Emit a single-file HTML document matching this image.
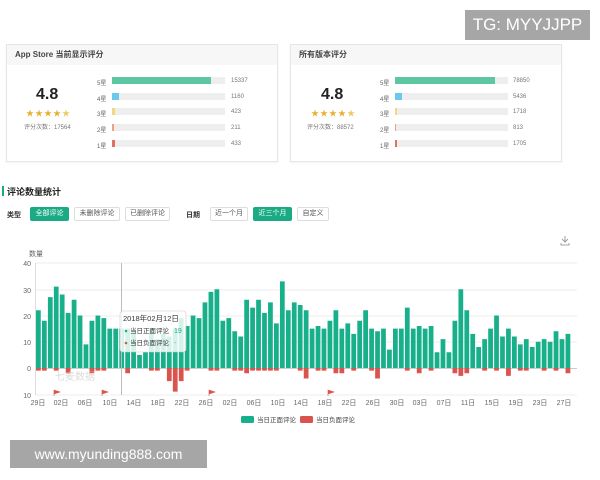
<!DOCTYPE html>
<html><head><meta charset="utf-8"><style>
*{margin:0;padding:0;box-sizing:border-box}
body{width:600px;height:480px;background:#fff;position:relative;overflow:hidden;font-family:"Liberation Sans","Noto Sans CJK SC",sans-serif;color:#333}
.a{position:absolute}
.card{position:absolute;border:1px solid #e6e6e6;background:#fff;box-shadow:0 1px 2px rgba(0,0,0,.05)}
.card .hd{height:20px;background:#f7f7f7;font-size:8px;font-weight:bold;line-height:20px;padding-left:8px;color:#444}
.sc{position:absolute;font-size:16px;font-weight:bold;color:#222}
.st{position:absolute;font-size:8px;color:#e8b030;letter-spacing:1px}
.cnt{position:absolute;font-size:6px;color:#777}
.rl{position:absolute;font-size:6px;color:#666}
.bg{position:absolute;height:7px;background:#eeeeee;width:113px}
.bg i{position:absolute;left:0;top:0;height:7px;display:block}
.btn{position:absolute;top:207px;height:14px;border:1px solid #ddd;font-size:7px;line-height:11px;text-align:center;color:#555;border-radius:2px;background:#fff}
.on{background:#1aab84;border-color:#1aab84;color:#fff}
</style></head><body>

<div class="a" style="left:465px;top:10px;width:125px;height:30px;background:#a6a6a6;color:#fff;font-size:17px;line-height:30px;text-align:center">TG: MYYJJPP</div>

<div class="card" style="left:6px;top:44px;width:272px;height:118px">
 <div class="hd">App Store 当前显示评分</div>
</div>
<div class="sc" style="left:36px;top:86px">4.8</div>
<div class="st" style="left:26px;top:108px">★★★★<span style="color:#f0c860">★</span></div>
<div class="cnt" style="left:24px;top:122px">评分次数：17564</div>

<div class="card" style="left:290px;top:44px;width:272px;height:118px">
 <div class="hd">所有版本评分</div>
</div>
<div class="sc" style="left:321px;top:86px">4.8</div>
<div class="st" style="left:311px;top:108px">★★★★<span style="color:#f0c860">★</span></div>
<div class="cnt" style="left:307px;top:122px">评分次数：88572</div>

<div class="rl" style="left:97px;top:78px">5星</div><div class="bg" style="left:112px;top:77px"><i style="width:99px;background:#5cc7a0"></i></div><div class="cnt" style="left:231px;top:78px">15337</div>
<div class="rl" style="left:97px;top:94px">4星</div><div class="bg" style="left:112px;top:93px"><i style="width:7px;background:#6cc9ec"></i></div><div class="cnt" style="left:231px;top:94px">1160</div>
<div class="rl" style="left:97px;top:109px">3星</div><div class="bg" style="left:112px;top:108px"><i style="width:3px;background:#f5d77c"></i></div><div class="cnt" style="left:231px;top:109px">423</div>
<div class="rl" style="left:97px;top:125px">2星</div><div class="bg" style="left:112px;top:124px"><i style="width:2px;background:#f0a080"></i></div><div class="cnt" style="left:231px;top:125px">211</div>
<div class="rl" style="left:97px;top:141px">1星</div><div class="bg" style="left:112px;top:140px"><i style="width:3px;background:#e07060"></i></div><div class="cnt" style="left:231px;top:141px">433</div>
<div class="rl" style="left:380px;top:78px">5星</div><div class="bg" style="left:395px;top:77px"><i style="width:100px;background:#5cc7a0"></i></div><div class="cnt" style="left:513px;top:78px">78850</div>
<div class="rl" style="left:380px;top:94px">4星</div><div class="bg" style="left:395px;top:93px"><i style="width:7px;background:#6cc9ec"></i></div><div class="cnt" style="left:513px;top:94px">5436</div>
<div class="rl" style="left:380px;top:109px">3星</div><div class="bg" style="left:395px;top:108px"><i style="width:2px;background:#f5d77c"></i></div><div class="cnt" style="left:513px;top:109px">1718</div>
<div class="rl" style="left:380px;top:125px">2星</div><div class="bg" style="left:395px;top:124px"><i style="width:1px;background:#f0a080"></i></div><div class="cnt" style="left:513px;top:125px">813</div>
<div class="rl" style="left:380px;top:141px">1星</div><div class="bg" style="left:395px;top:140px"><i style="width:2px;background:#e07060"></i></div><div class="cnt" style="left:513px;top:141px">1705</div>

<div class="a" style="left:2px;top:186px;width:2px;height:10px;background:#1aab84"></div>
<div class="a" style="left:7px;top:185px;font-size:9px;font-weight:bold;color:#222">评论数量统计</div>

<div class="a" style="left:7px;top:210px;font-size:7px;font-weight:bold">类型</div>
<div class="btn on" style="left:30px;width:39px">全部评论</div>
<div class="btn" style="left:74px;width:46px">未删除评论</div>
<div class="btn" style="left:125px;width:45px">已删除评论</div>
<div class="a" style="left:186px;top:210px;font-size:7px;font-weight:bold">日期</div>
<div class="btn" style="left:210px;width:38px">近一个月</div>
<div class="btn on" style="left:253px;width:39px">近三个月</div>
<div class="btn" style="left:297px;width:32px">自定义</div>

<svg class="a" style="left:0;top:0" width="600" height="480" font-family="Liberation Sans,Noto Sans CJK SC,sans-serif">
 <text x="29" y="256" font-size="7" fill="#666">数量</text>
 <g stroke="#888" fill="none" stroke-width="0.8"><path d="M565 236v5M562 239l3 3 3-3M561 243v2h8v-2"/></g>
 <g stroke="#eee" stroke-width="1">
  <line x1="36" y1="263" x2="577" y2="263"/><line x1="36" y1="290" x2="577" y2="290"/>
  <line x1="36" y1="316" x2="577" y2="316"/><line x1="36" y1="342" x2="577" y2="342"/>
  <line x1="36" y1="395" x2="577" y2="395"/>
 </g>
 <line x1="36" y1="368.5" x2="577" y2="368.5" stroke="#ccc"/>
 <line x1="35.5" y1="263" x2="35.5" y2="395" stroke="#ddd"/>
 <g font-size="7" fill="#666" text-anchor="end">
  <text x="31" y="266">40</text><text x="31" y="293">30</text><text x="31" y="319">20</text>
  <text x="31" y="345">10</text><text x="31" y="371">0</text><text x="31" y="398">10</text>
 </g>
 <g transform="translate(36,368) scale(5.95,-2.625)" fill="#17b08a">
  <rect x="0" y="0" width="0.8" height="22"/><rect x="1" y="0" width="0.8" height="18"/><rect x="2" y="0" width="0.8" height="27"/><rect x="3" y="0" width="0.8" height="31"/><rect x="4" y="0" width="0.8" height="28"/><rect x="5" y="0" width="0.8" height="21"/><rect x="6" y="0" width="0.8" height="26"/><rect x="7" y="0" width="0.8" height="20"/><rect x="8" y="0" width="0.8" height="9"/><rect x="9" y="0" width="0.8" height="18"/>
  <rect x="10" y="0" width="0.8" height="20"/><rect x="11" y="0" width="0.8" height="19"/><rect x="12" y="0" width="0.8" height="15"/><rect x="13" y="0" width="0.8" height="15"/><rect x="14" y="0" width="0.8" height="15"/><rect x="15" y="0" width="0.8" height="15"/><rect x="16" y="0" width="0.8" height="14"/><rect x="17" y="0" width="0.8" height="5"/><rect x="18" y="0" width="0.8" height="6"/><rect x="19" y="0" width="0.8" height="15"/>
  <rect x="20" y="0" width="0.8" height="11"/><rect x="21" y="0" width="0.8" height="13"/><rect x="22" y="0" width="0.8" height="12"/><rect x="23" y="0" width="0.8" height="15"/><rect x="24" y="0" width="0.8" height="19"/><rect x="25" y="0" width="0.8" height="16"/><rect x="26" y="0" width="0.8" height="20"/><rect x="27" y="0" width="0.8" height="19"/><rect x="28" y="0" width="0.8" height="25"/><rect x="29" y="0" width="0.8" height="29"/>
  <rect x="30" y="0" width="0.8" height="30"/><rect x="31" y="0" width="0.8" height="18"/><rect x="32" y="0" width="0.8" height="19"/><rect x="33" y="0" width="0.8" height="14"/><rect x="34" y="0" width="0.8" height="12"/><rect x="35" y="0" width="0.8" height="26"/><rect x="36" y="0" width="0.8" height="23"/><rect x="37" y="0" width="0.8" height="26"/><rect x="38" y="0" width="0.8" height="21"/><rect x="39" y="0" width="0.8" height="25"/>
  <rect x="40" y="0" width="0.8" height="17"/><rect x="41" y="0" width="0.8" height="33"/><rect x="42" y="0" width="0.8" height="22"/><rect x="43" y="0" width="0.8" height="25"/><rect x="44" y="0" width="0.8" height="24"/><rect x="45" y="0" width="0.8" height="22"/><rect x="46" y="0" width="0.8" height="15"/><rect x="47" y="0" width="0.8" height="16"/><rect x="48" y="0" width="0.8" height="15"/><rect x="49" y="0" width="0.8" height="18"/>
  <rect x="50" y="0" width="0.8" height="22"/><rect x="51" y="0" width="0.8" height="15"/><rect x="52" y="0" width="0.8" height="17"/><rect x="53" y="0" width="0.8" height="13"/><rect x="54" y="0" width="0.8" height="18"/><rect x="55" y="0" width="0.8" height="22"/><rect x="56" y="0" width="0.8" height="15"/><rect x="57" y="0" width="0.8" height="14"/><rect x="58" y="0" width="0.8" height="15"/><rect x="59" y="0" width="0.8" height="7"/>
  <rect x="60" y="0" width="0.8" height="15"/><rect x="61" y="0" width="0.8" height="15"/><rect x="62" y="0" width="0.8" height="23"/><rect x="63" y="0" width="0.8" height="15"/><rect x="64" y="0" width="0.8" height="16"/><rect x="65" y="0" width="0.8" height="15"/><rect x="66" y="0" width="0.8" height="16"/><rect x="67" y="0" width="0.8" height="6"/><rect x="68" y="0" width="0.8" height="11"/><rect x="69" y="0" width="0.8" height="6"/>
  <rect x="70" y="0" width="0.8" height="18"/><rect x="71" y="0" width="0.8" height="30"/><rect x="72" y="0" width="0.8" height="22"/><rect x="73" y="0" width="0.8" height="13"/><rect x="74" y="0" width="0.8" height="8"/><rect x="75" y="0" width="0.8" height="11"/><rect x="76" y="0" width="0.8" height="15"/><rect x="77" y="0" width="0.8" height="20"/><rect x="78" y="0" width="0.8" height="12"/><rect x="79" y="0" width="0.8" height="15"/>
  <rect x="80" y="0" width="0.8" height="12"/><rect x="81" y="0" width="0.8" height="9"/><rect x="82" y="0" width="0.8" height="11"/><rect x="83" y="0" width="0.8" height="8"/><rect x="84" y="0" width="0.8" height="10"/><rect x="85" y="0" width="0.8" height="11"/><rect x="86" y="0" width="0.8" height="10"/><rect x="87" y="0" width="0.8" height="14"/><rect x="88" y="0" width="0.8" height="11"/><rect x="89" y="0" width="0.8" height="13"/>
 </g>
 <g transform="translate(36,368) scale(5.95,2.625)" fill="#d9534f">
  <rect x="0" y="0" width="0.8" height="1"/><rect x="1" y="0" width="0.8" height="1"/><rect x="3" y="0" width="0.8" height="1"/><rect x="5" y="0" width="0.8" height="2"/><rect x="9" y="0" width="0.8" height="2"/><rect x="10" y="0" width="0.8" height="1"/><rect x="11" y="0" width="0.8" height="1"/><rect x="15" y="0" width="0.8" height="2"/>
  <rect x="19" y="0" width="0.8" height="1"/><rect x="20" y="0" width="0.8" height="1"/><rect x="22" y="0" width="0.8" height="5"/><rect x="23" y="0" width="0.8" height="9"/><rect x="24" y="0" width="0.8" height="5"/><rect x="25" y="0" width="0.8" height="1"/><rect x="29" y="0" width="0.8" height="1"/><rect x="30" y="0" width="0.8" height="1"/>
  <rect x="33" y="0" width="0.8" height="1"/><rect x="34" y="0" width="0.8" height="1"/><rect x="35" y="0" width="0.8" height="2"/><rect x="36" y="0" width="0.8" height="1"/><rect x="37" y="0" width="0.8" height="1"/><rect x="38" y="0" width="0.8" height="1"/><rect x="39" y="0" width="0.8" height="1"/><rect x="40" y="0" width="0.8" height="1"/>
  <rect x="44" y="0" width="0.8" height="1"/><rect x="45" y="0" width="0.8" height="4"/><rect x="47" y="0" width="0.8" height="1"/><rect x="48" y="0" width="0.8" height="1"/><rect x="50" y="0" width="0.8" height="2"/><rect x="51" y="0" width="0.8" height="2"/><rect x="53" y="0" width="0.8" height="1"/><rect x="56" y="0" width="0.8" height="1"/><rect x="57" y="0" width="0.8" height="4"/>
  <rect x="62" y="0" width="0.8" height="1"/><rect x="64" y="0" width="0.8" height="2"/><rect x="66" y="0" width="0.8" height="1"/><rect x="70" y="0" width="0.8" height="2"/><rect x="71" y="0" width="0.8" height="3"/><rect x="72" y="0" width="0.8" height="2"/><rect x="75" y="0" width="0.8" height="1"/><rect x="77" y="0" width="0.8" height="1"/><rect x="79" y="0" width="0.8" height="3"/><rect x="81" y="0" width="0.8" height="1"/><rect x="82" y="0" width="0.8" height="1"/><rect x="85" y="0" width="0.8" height="1"/><rect x="87" y="0" width="0.8" height="1"/><rect x="89" y="0" width="0.8" height="2"/>
 </g>
 <text x="55" y="380" font-size="10" fill="#ccc" opacity="0.7">七麦数据</text>
 <g fill="#d9534f" stroke="#d9534f" stroke-width="0.6">
  <path d="M54 390v6M54 390l6 2-6 2z"/><path d="M102 390v6M102 390l6 2-6 2z"/><path d="M209 390v6M209 390l6 2-6 2z"/><path d="M328 390v6M328 390l6 2-6 2z"/>
 </g>
 <line x1="121.5" y1="263" x2="121.5" y2="395" stroke="#bbb"/>
 <rect x="120" y="311" width="66" height="41" rx="3" fill="#fff" fill-opacity="0.82" stroke="#ccc" stroke-width="0.6"/>
 <text x="123" y="321" font-size="7.5" fill="#333">2018年02月12日</text>
 <circle cx="126" cy="331" r="1.3" fill="#17b08a"/><text x="130" y="333" font-size="6.5" fill="#333">当日正面评论</text><text x="174" y="333" font-size="7" fill="#17b08a">19</text>
 <circle cx="126" cy="343" r="1.3" fill="#d9534f"/><text x="130" y="345" font-size="6.5" fill="#333">当日负面评论</text><text x="174" y="345" font-size="7" fill="#999">-</text>
 <g font-size="7" fill="#666" text-anchor="middle">
  <text x="38" y="405">29日</text><text x="61" y="405">02日</text><text x="85" y="405">06日</text><text x="110" y="405">10日</text><text x="134" y="405">14日</text><text x="158" y="405">18日</text><text x="182" y="405">22日</text><text x="206" y="405">26日</text><text x="230" y="405">02日</text><text x="254" y="405">06日</text><text x="278" y="405">10日</text><text x="301" y="405">14日</text><text x="325" y="405">18日</text><text x="349" y="405">22日</text><text x="373" y="405">26日</text><text x="397" y="405">30日</text><text x="420" y="405">03日</text><text x="444" y="405">07日</text><text x="468" y="405">11日</text><text x="492" y="405">15日</text><text x="516" y="405">19日</text><text x="540" y="405">23日</text><text x="564" y="405">27日</text>
 </g>
 <rect x="241" y="416" width="13" height="7" rx="1.5" fill="#17b08a"/><text x="257" y="422" font-size="6.5" fill="#444">当日正面评论</text>
 <rect x="300" y="416" width="13" height="7" rx="1.5" fill="#d9534f"/><text x="316" y="422" font-size="6.5" fill="#444">当日负面评论</text>
</svg>

<div class="a" style="left:10px;top:440px;width:197px;height:28px;background:#a6a6a6;color:#fff;font-size:14px;line-height:28px;text-align:center">www.myunding888.com</div>
</body></html>
